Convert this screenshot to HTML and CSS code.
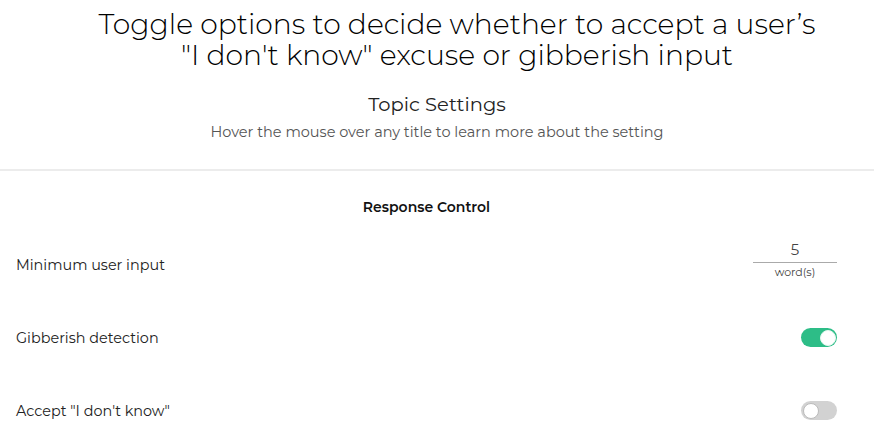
FILE: index.html
```html
<!DOCTYPE html>
<html>
<head>
<meta charset="utf-8">
<link rel="stylesheet" href="styles.css">
</head>
<body>
<div class="page">
  <h1 class="title">Toggle options to decide whether to accept a user’s<br>"I don't know" excuse or gibberish input</h1>
  <div class="header">
    <h2 class="topic">Topic Settings</h2>
    <p class="hint">Hover the mouse over any title to learn more about the setting</p>
  </div>
  <div class="section">
    <h3 class="section-title">Response Control</h3>
    <div class="rows">
      <div class="row">
        <span class="label">Minimum user input</span>
        <div class="words">
          <span class="words-value">5</span>
          <span class="words-unit">word(s)</span>
        </div>
      </div>
      <div class="row">
        <span class="label">Gibberish detection</span>
        <span class="toggle on"><span class="knob"></span></span>
      </div>
      <div class="row">
        <span class="label">Accept "I don't know"</span>
        <span class="toggle"><span class="knob"></span></span>
      </div>
    </div>
  </div>
</div>
</body>
</html>
```
FILE: styles.css
```css
html, body {
  margin: 0;
  padding: 0;
  background: #fff;
}
body {
  font-family: "Montserrat", Lato, "Noto Sans", sans-serif;
  color: #222;
}
.page {
  width: 874px;
}
.title {
  margin: 0;
  padding: 9px 0 0 40px;
  font-weight: 300;
  font-size: 28.2px;
  line-height: 31px;
  text-align: center;
  color: #000;
}
.header {
  text-align: center;
  border-bottom: 2px solid #ececec;
  padding: 21px 0 28px;
}
.topic {
  margin: 0;
  font-size: 19.5px;
  font-weight: 400;
  line-height: 24px;
  color: #222;
}
.hint {
  margin: 7px 0 0;
  font-size: 14.5px;
  line-height: 18px;
  color: #555;
}
.section {
  padding: 0 37px 0 16px;
}
.section-title {
  margin: 0;
  padding-top: 27px;
  font-size: 14px;
  font-weight: 600;
  line-height: 18px;
  text-align: center;
  color: #111;
}
.rows {
  padding-top: 12px;
}
.row {
  display: flex;
  align-items: center;
  justify-content: space-between;
  height: 73px;
}
.label {
  font-size: 14.4px;
  color: #222;
}
.words {
  display: flex;
  flex-direction: column;
  align-items: center;
  width: 84px;
  margin-bottom: 10px;
}
.words-value {
  width: 100%;
  text-align: center;
  font-size: 15px;
  line-height: 20px;
  color: #444;
  border-bottom: 1px solid #aaa;
  padding-bottom: 2px;
}
.words-unit {
  font-size: 11px;
  line-height: 16px;
  margin-top: 1px;
  color: #444;
}
.toggle {
  position: relative;
  width: 36px;
  height: 19px;
  border-radius: 10px;
  background: #d2d2d2;
}
.toggle.on {
  background: #2dbd87;
}
.knob {
  position: absolute;
  top: 1.5px;
  left: 1.5px;
  width: 16px;
  height: 16px;
  border-radius: 50%;
  background: #fff;
  box-sizing: border-box;
  border: 1px solid #bbb;
}
.toggle.on .knob {
  left: auto;
  right: 1.5px;
  border: 1px solid #e6f7f0;
}
```
